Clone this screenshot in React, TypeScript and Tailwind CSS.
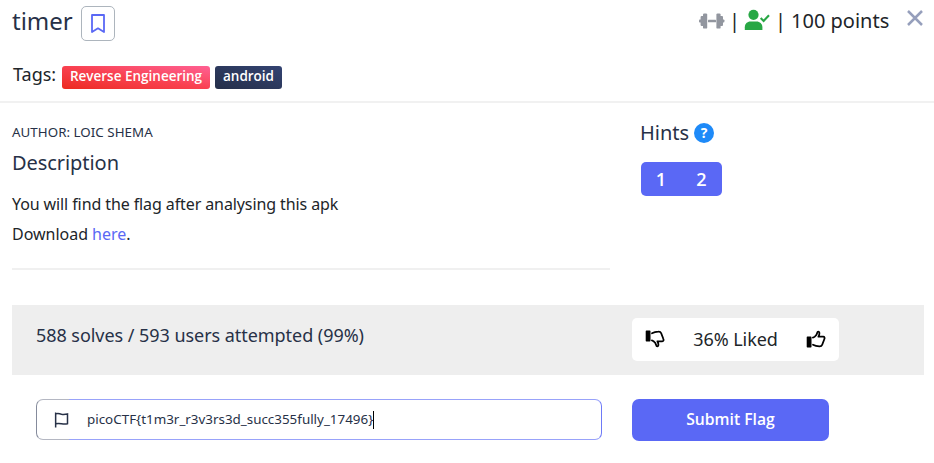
import type { ReactNode } from 'react';

function Tag({ className, children }: { className: string; children: ReactNode }) {
  return (
    <span className={`flex h-[23px] items-center justify-center rounded-[3px] pb-[3px] font-['Open_Sans',sans-serif] text-[13.5px] font-semibold leading-5 text-white ${className}`}>
      {children}
    </span>
  );
}

function Bookmark() {
  return (
    <svg width="34" height="35" viewBox="0 0 34 35" fill="none" className="shrink-0">
      <path d="M11 9H23V26L17 22.3L11 26Z" stroke="#5a68f5" strokeWidth="1.8" strokeLinejoin="round" />
    </svg>
  );
}

function Dumbbell() {
  return (
    <svg width="26" height="16" viewBox="0 0 26 16" fill="#92969f">
      <rect x="0" y="6.5" width="3" height="3" rx=".8" />
      <rect x="1.6" y="3" width="4" height="10" rx="1" />
      <rect x="4" y=".4" width="4.2" height="15.2" rx="1.2" />
      <rect x="9" y="6.7" width="8" height="2.6" rx=".5" />
      <rect x="17.4" y=".4" width="4.2" height="15.2" rx="1.2" />
      <rect x="20" y="3" width="4" height="10" rx="1" />
      <rect x="22.4" y="6.5" width="3" height="3" rx=".8" />
    </svg>
  );
}

function UserCheck() {
  return (
    <svg width="26" height="22" viewBox="0 0 26 22" fill="none">
      <circle cx="9.5" cy="5.8" r="5.1" fill="#28a745" />
      <path d="M.8 21V18.2C.8 14.8 3.2 12.5 6.5 12.5H12.5C15.8 12.5 18.4 14.8 18.4 18.2V21Z" fill="#28a745" />
      <path d="M16.7 9L19.6 12L25 6.2" stroke="#28a745" strokeWidth="2.1" />
    </svg>
  );
}

function Thumb({ down = false }: { down?: boolean }) {
  return (
    <svg width="20" height="18" viewBox="0 0 20 18" fill="none" className={down ? '-scale-y-100' : ''}>
      <path d="M1.4 7.3H4.8V16.8H1.4Z" fill="#000" stroke="#000" strokeWidth="1.4" strokeLinejoin="round" />
      <path d="M6.9 7.6C9 7.2 9.6 5.8 10.5 4.6C11.2 3.6 11 1.6 12.2 1.6C14 1.6 13.5 4.8 12.4 6.7H17.2C18.6 6.7 18.9 8 18.3 9.2L16.2 14.8C15.7 16.1 14.7 16.5 13.3 16.4C10.5 16.3 9 15.9 7 14.8" stroke="#000" strokeWidth="1.8" strokeLinecap="round" strokeLinejoin="round" />
    </svg>
  );
}

function Flag() {
  return (
    <svg width="16" height="18" viewBox="0 0 16 18" fill="none" stroke="#273147" strokeWidth="1.6">
      <path d="M1.75 1V17M1.75 2.5C4 1.8 6 2.2 8 2.8C10.5 3.3 12.2 3 14.4 2.5V13C12 13.6 10.5 13.5 8 13C5.5 12.5 4 12.4 1.75 13" />
    </svg>
  );
}

export default function App() {
  return (
    <main className="h-[463px] w-[934px] overflow-hidden bg-white font-['Noto_Sans',sans-serif] text-[#212529]">
      <header className="h-[103px] border-b-2 border-[#f1f1f1]">
        <div className="flex h-[62px] items-start justify-between">
          <div className="flex pl-3">
            <h1 className="w-[69px] pt-[5px] text-[24px] leading-8 text-[#273147]">timer</h1>
            <button aria-label="Bookmark" className="mt-[6px] flex h-[35px] w-[34px] items-center justify-center rounded-[5px] border border-[#adb5bd]">
              <Bookmark />
            </button>
          </div>
          <div className="flex w-[235px] text-[20px] leading-7">
            <span className="mt-[13px] w-[30px]"><Dumbbell /></span>
            <span className="mt-[7px] w-[15px]">|</span>
            <span className="mt-[9px] w-[31px]"><UserCheck /></span>
            <span className="mt-[7px] w-[16px]">|</span>
            <span className="mt-[7px] w-[116px] whitespace-nowrap">100 points</span>
            <svg aria-label="Close" className="mt-[10px]" width="16" height="16" viewBox="0 0 16 16" stroke="#969fbc" strokeWidth="2.5"><path d="M1 1L15 15M15 1L1 15" /></svg>
          </div>
        </div>
        <div className="flex pl-[13px]">
          <span className="w-[49px] whitespace-nowrap text-[18px] leading-6">Tags:</span>
          <div className="mt-[3.5px] flex gap-[5px]">
            <Tag className="w-[148px] bg-linear-to-tr from-[#ec2a1c] via-[#f94150] to-[#ff6094]">Reverse Engineering</Tag>
            <Tag className="w-[67px] bg-linear-to-tr from-[#252f49] to-[#334372]">android</Tag>
          </div>
        </div>
      </header>

      <div className="flex h-[201.5px] pl-3">
        <section className="h-[167px] w-[598px] border-b-2 border-[#f0f0f0]">
          <p className="pt-[19px] text-[13.33px] leading-5 tracking-[0.04px] text-[#273147]">AUTHOR: LOIC SHEMA</p>
          <h2 className="pt-[7px] text-[20px] leading-7 tracking-[-0.06px] text-[#273147]">Description</h2>
          <div className="pt-[12px] text-[16px] leading-[30px] tracking-[-0.1px]">
            <p>You will find the flag after analysing this apk</p>
            <p className="tracking-[-0.02px]">Download <a className="text-[#5a68f5]">here</a>.</p>
          </div>
        </section>
        <aside className="pl-[30px] pt-4">
          <div className="flex items-center text-[20px] leading-7 text-[#273147]">
            <h2 className="w-[54px]">Hints</h2>
            <span className="flex h-5 w-5 items-center justify-center rounded-full bg-[#1e8af8] font-['Open_Sans',sans-serif] text-[14px] font-bold leading-5 text-white">?</span>
          </div>
          <div className="ml-[1px] mt-[15px] flex h-[34px] w-[81px] items-center rounded-[5px] bg-[#5a68f5] text-center font-['Open_Sans',sans-serif] text-[18px] font-semibold text-white">
            <span className="w-[40px]">1</span><span className="w-[41px]">2</span>
          </div>
        </aside>
      </div>

      <section className="ml-3 flex h-[70px] w-[912px] bg-[#eeeeee]">
        <p className="w-[620px] pl-6 pt-[16.5px] text-[18px] leading-7 tracking-[-0.05px] text-[#273147]">588 solves / 593 users attempted (99%)</p>
        <div className="mt-[13px] flex h-[43px] w-[207px] items-center justify-between rounded-[5px] bg-white px-[13px] text-[18px]">
          <Thumb down /><span className="tracking-[-0.05px]">36% Liked</span><Thumb />
        </div>
      </section>

      <div className="flex gap-[30px] pl-9 pt-[24.5px]">
        <div className="flex h-[41px] w-[566px]">
          <div className="flex w-[33px] items-center rounded-l-[7px] border-y border-l border-y-[#b4b7c2] border-l-[#858b9c] pl-[17px]">
            <Flag />
          </div>
          <div className="flex flex-1 items-center rounded-r-[7px] border-y border-r border-y-[#98a2fa] border-r-[#6e7af7] pl-[18px] text-[13.4px] text-[#273147]">
            <span className="pb-px">picoCTF{'{'}t1m3r_r3v3rs3d_succ355fully_17496{'}'}</span>
            <span className="h-[18px] w-px bg-black" />
          </div>
        </div>
        <button className="h-[42px] w-[197px] rounded-[7px] bg-[#5a68f5] pb-px font-['Open_Sans',sans-serif] text-[15.7px] font-semibold text-white">Submit Flag</button>
      </div>
    </main>
  );
}
